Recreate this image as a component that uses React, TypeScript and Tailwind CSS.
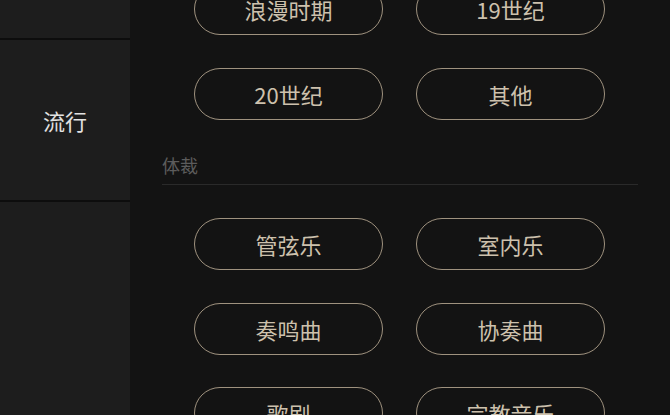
import React from "react";

const font = { fontFamily: '"Noto Sans CJK SC", "Noto Sans", sans-serif' };

function Pill({ label }: { label: string }) {
  return (
    <div className="h-[52px] rounded-full border-[1.5px] border-[#9f927f] flex items-center justify-center text-[22px] leading-none text-[#cdc1ad]">
      {label}
    </div>
  );
}

function Grid({ items, gap }: { items: string[]; gap: string }) {
  return (
    <div className={"grid grid-cols-[189px_189px] pl-[64px] gap-x-[33px] " + gap}>
      {items.map((t) => (
        <Pill key={t} label={t} />
      ))}
    </div>
  );
}

export default function App() {
  return (
    <div className="w-[670px] h-[415px] overflow-hidden flex bg-[#131313]" style={font}>
      <div className="w-[130px] shrink-0 bg-[#1d1d1d] flex flex-col">
        <div className="h-[38px]" />
        <div className="h-[2px] bg-[#0d0d0d]" />
        <div className="h-[160px] flex items-center justify-center text-[22px] text-[#e2e2e2]">流行</div>
        <div className="h-[2px] bg-[#0d0d0d]" />
        <div className="flex-1" />
      </div>
      <div className="flex-1 flex flex-col">
        <div className="mt-[-17px]">
          <Grid items={["浪漫时期", "19世纪", "20世纪", "其他"]} gap="gap-y-[33px]" />
        </div>
        <div className="mx-[32px] mt-[34px] pb-[8px] border-b border-[#2a2a2a] text-[18px] leading-[22px] text-[#5c5c5c]">
          体裁
        </div>
        <div className="mt-[33px]">
          <Grid items={["管弦乐", "室内乐", "奏鸣曲", "协奏曲", "歌剧", "宗教音乐"]} gap="gap-y-[32.5px]" />
        </div>
      </div>
    </div>
  );
}
